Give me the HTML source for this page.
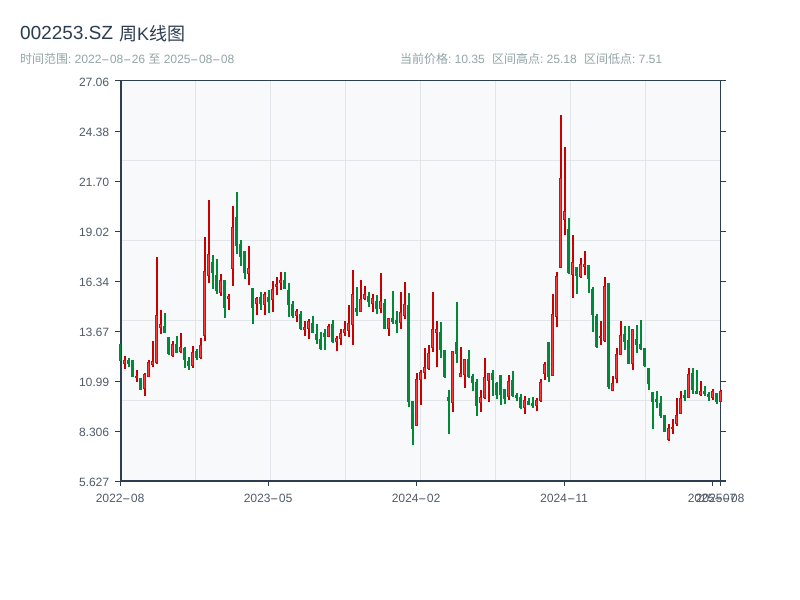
<!DOCTYPE html>
<html lang="zh">
<head>
<meta charset="utf-8">
<title>002253.SZ 周K线图</title>
<style>
html,body{margin:0;padding:0;background:#fff;width:800px;height:600px;overflow:hidden}
svg{position:absolute;left:0;top:0;display:block}
.t{position:absolute;white-space:nowrap;font-family:"Liberation Sans","Noto Sans CJK SC",sans-serif;text-rendering:geometricPrecision}
.s{font-size:12px;line-height:16px;color:#95a5a6;top:51px}
.y{font-size:12px;line-height:16px;color:#4f5b69;left:49px;width:60px;text-align:right}
.x{font-size:12px;line-height:16px;color:#4f5b69;top:490px;width:80px;text-align:center}
.h{display:inline-block;width:8.5px;text-align:left;transform:scaleX(2.1);transform-origin:0 50%}
</style>
</head>
<body>
<svg id="c" width="800" height="600" viewBox="0 0 800 600" shape-rendering="crispEdges">
<rect x="121" y="81" width="600" height="400" fill="#f8f9fb"/>
<g fill="#e2e5ea">
<rect x="195" y="81" width="1" height="400"/><rect x="270" y="81" width="1" height="400"/><rect x="345" y="81" width="1" height="400"/><rect x="420" y="81" width="1" height="400"/><rect x="495" y="81" width="1" height="400"/><rect x="570" y="81" width="1" height="400"/><rect x="645" y="81" width="1" height="400"/>
<rect x="121" y="160" width="600" height="1"/><rect x="121" y="240" width="600" height="1"/><rect x="121" y="320" width="600" height="1"/><rect x="121" y="400" width="600" height="1"/>
</g>
<g fill="#2c3e50">
<rect x="120" y="80" width="2" height="402"/>
<rect x="115" y="80" width="611" height="1"/>
<rect x="720" y="80" width="1" height="406"/>
<rect x="120" y="480" width="606" height="2"/>
<rect x="115" y="131" width="5" height="1"/><rect x="115" y="181" width="5" height="1"/><rect x="115" y="231" width="5" height="1"/><rect x="115" y="281" width="5" height="1"/><rect x="115" y="331" width="5" height="1"/><rect x="115" y="381" width="5" height="1"/><rect x="115" y="431" width="5" height="1"/><rect x="115" y="481" width="5" height="1"/>
<rect x="721" y="131" width="5" height="1"/><rect x="721" y="181" width="5" height="1"/><rect x="721" y="231" width="5" height="1"/><rect x="721" y="281" width="5" height="1"/><rect x="721" y="331" width="5" height="1"/><rect x="721" y="381" width="5" height="1"/><rect x="721" y="431" width="5" height="1"/>
<rect x="120" y="482" width="1" height="4"/><rect x="268" y="482" width="1" height="4"/><rect x="416" y="482" width="1" height="4"/><rect x="564" y="482" width="1" height="4"/><rect x="712" y="482" width="1" height="4"/>
</g>
<g id="k"></g>
</svg>

<div class="t" style="left:20px;top:22px;font-size:19px;line-height:24px;color:#2c3e50">002253.SZ</div>
<div class="t" style="left:119px;top:22px;font-size:18px;line-height:24px;color:#2c3e50">周K线图</div>

<div class="t s" style="left:20px">时间范围: 2022<span class="h">-</span>08<span class="h">-</span>26 至 2025<span class="h">-</span>08<span class="h">-</span>08</div>
<div class="t s" style="left:400px">当前价格: 10.35</div>
<div class="t s" style="left:492px">区间高点: 25.18</div>
<div class="t s" style="left:584px">区间低点: 7.51</div>

<div class="t y" style="top:74px">27.06</div>
<div class="t y" style="top:124px">24.38</div>
<div class="t y" style="top:174px">21.70</div>
<div class="t y" style="top:224px">19.02</div>
<div class="t y" style="top:274px">16.34</div>
<div class="t y" style="top:324px">13.67</div>
<div class="t y" style="top:374px">10.99</div>
<div class="t y" style="top:424px">8.306</div>
<div class="t y" style="top:474px">5.627</div>

<div class="t x" style="left:80px">2022<span class="h">-</span>08</div>
<div class="t x" style="left:228px">2023<span class="h">-</span>05</div>
<div class="t x" style="left:376px">2024<span class="h">-</span>02</div>
<div class="t x" style="left:524px">2024<span class="h">-</span>11</div>
<div class="t x" style="left:672px">2025<span class="h">-</span>07</div>
<div class="t x" style="left:680px">2025<span class="h">-</span>08</div>

<script>
var D="g344 361 345 361|r356 369 360 364|g358 367 360 364|g360 377 360 377|r370 382 376 378|g378 390 378 390|r373 396 374 389|r360 377 362 377|r341 367 361 365|r257 364 315 363|r310 334 324 328|g313 333 326 333|g337 355 337 354|r341 357 344 356|g336 353 344 353|r333 353 347 352|g347 368 348 360|g357 370 361 366|r346 368 352 366|g349 360 351 358|r338 359 345 358|r237 341 271 336|r200 283 254 276|g255 289 262 273|g259 294 275 291|r274 296 280 293|g280 318 280 308|r294 310 296 299|r206 286 227 269|g192 254 217 246|g240 266 244 257|g251 279 251 273|r246 285 268 274|g288 324 288 308|r297 315 298 304|g292 310 297 304|r292 315 294 305|g290 313 297 302|r281 312 289 300|r277 295 284 287|r272 290 280 283|g272 289 280 289|g283 317 290 305|g301 318 304 316|r309 322 311 316|g311 330 314 329|r321 336 327 330|r319 339 321 329|g316 333 323 333|g324 344 334 340|g332 350 339 349|g329 350 333 337|r324 337 326 337|g320 343 324 342|r336 351 338 342|r329 345 333 339|r321 336 329 333|r305 337 323 331|r270 345 294 325|g287 316 308 312|r280 312 299 312|r286 300 294 299|g292 307 296 302|r294 312 298 304|g295 314 301 309|r273 313 301 309|g299 329 303 329|r318 336 318 329|g291 324 318 322|g311 333 320 324|r292 329 312 323|r282 319 304 316|g293 407 305 402|g401 445 401 429|r373 426 379 426|r370 405 372 380|r348 379 367 373|r345 370 353 369|r292 352 329 348|r321 367 329 333|g322 358 332 350|g350 378 350 377|g390 434 397 401|r351 412 351 403|g302 363 342 354|r347 377 373 377|r359 388 359 375|g350 378 359 377|g374 391 376 383|g379 416 382 406|r390 412 397 403|r358 399 377 398|r373 402 373 381|g370 396 373 380|g382 399 383 395|g375 405 375 395|g389 404 389 399|r375 400 381 397|g371 397 380 396|g393 401 395 398|g394 409 397 408|r396 414 400 408|g398 405 401 405|g397 408 403 406|r398 411 400 406|r379 402 382 401|r362 380 364 374|g342 382 342 377|r294 376 314 376|r272 327 276 317|r115 268 178 268|r147 235 211 220|g218 274 229 273|r235 298 262 275|g267 294 267 276|r258 278 264 277|r251 275 264 267|g265 293 265 279|g287 332 289 315|g314 348 316 347|r321 345 336 338|r277 342 286 341|g283 389 283 387|r376 391 383 391|r348 383 354 379|r321 355 335 355|g326 350 334 342|g326 364 340 364|r329 370 329 364|g325 353 339 345|g320 350 344 349|g348 367 348 366|g368 390 368 384|g392 429 392 402|g391 408 399 402|g396 418 403 416|g415 432 415 432|r424 441 428 440|r419 434 427 429|r398 426 415 424|r391 414 398 414|g390 401 395 398|r368 398 374 398|g368 394 373 390|g370 394 391 394|r381 396 391 395|g386 396 391 394|g392 401 394 397|r389 400 391 398|g393 404 393 402|r390 402 391 402".split("|");
var s="";
function R(x,y,w,h,f){return '<rect x="'+x+'" y="'+y+'" width="'+w+'" height="'+h+'" fill="'+f+'"/>';}
D.forEach(function(d,i){
  var c=d[0],p=d.slice(1).split(" ").map(Number),x=120+4*i;
  var hi=p[0],lo=p[1],t=p[2],b=p[3],h=b-t;
  if(c=="r"){
    s+=R(x,hi,2,lo-hi,"#c80000");
    s+=R(x-1,t,3,h,"#dc0a0a");
    if(h>2)s+=R(x,t+1,1,h-2,"#ff3a3a");
  }else{
    if(i==0){s+=R(x-1,hi,2,lo-hi,"#008a38");}
    else{
      s+=R(x,hi,2,lo-hi,"#008a38");
      s+=R(x-1,t,3,h,"#008a38");
    }
  }
});
document.getElementById("k").innerHTML=s;
</script>
</body>
</html>
